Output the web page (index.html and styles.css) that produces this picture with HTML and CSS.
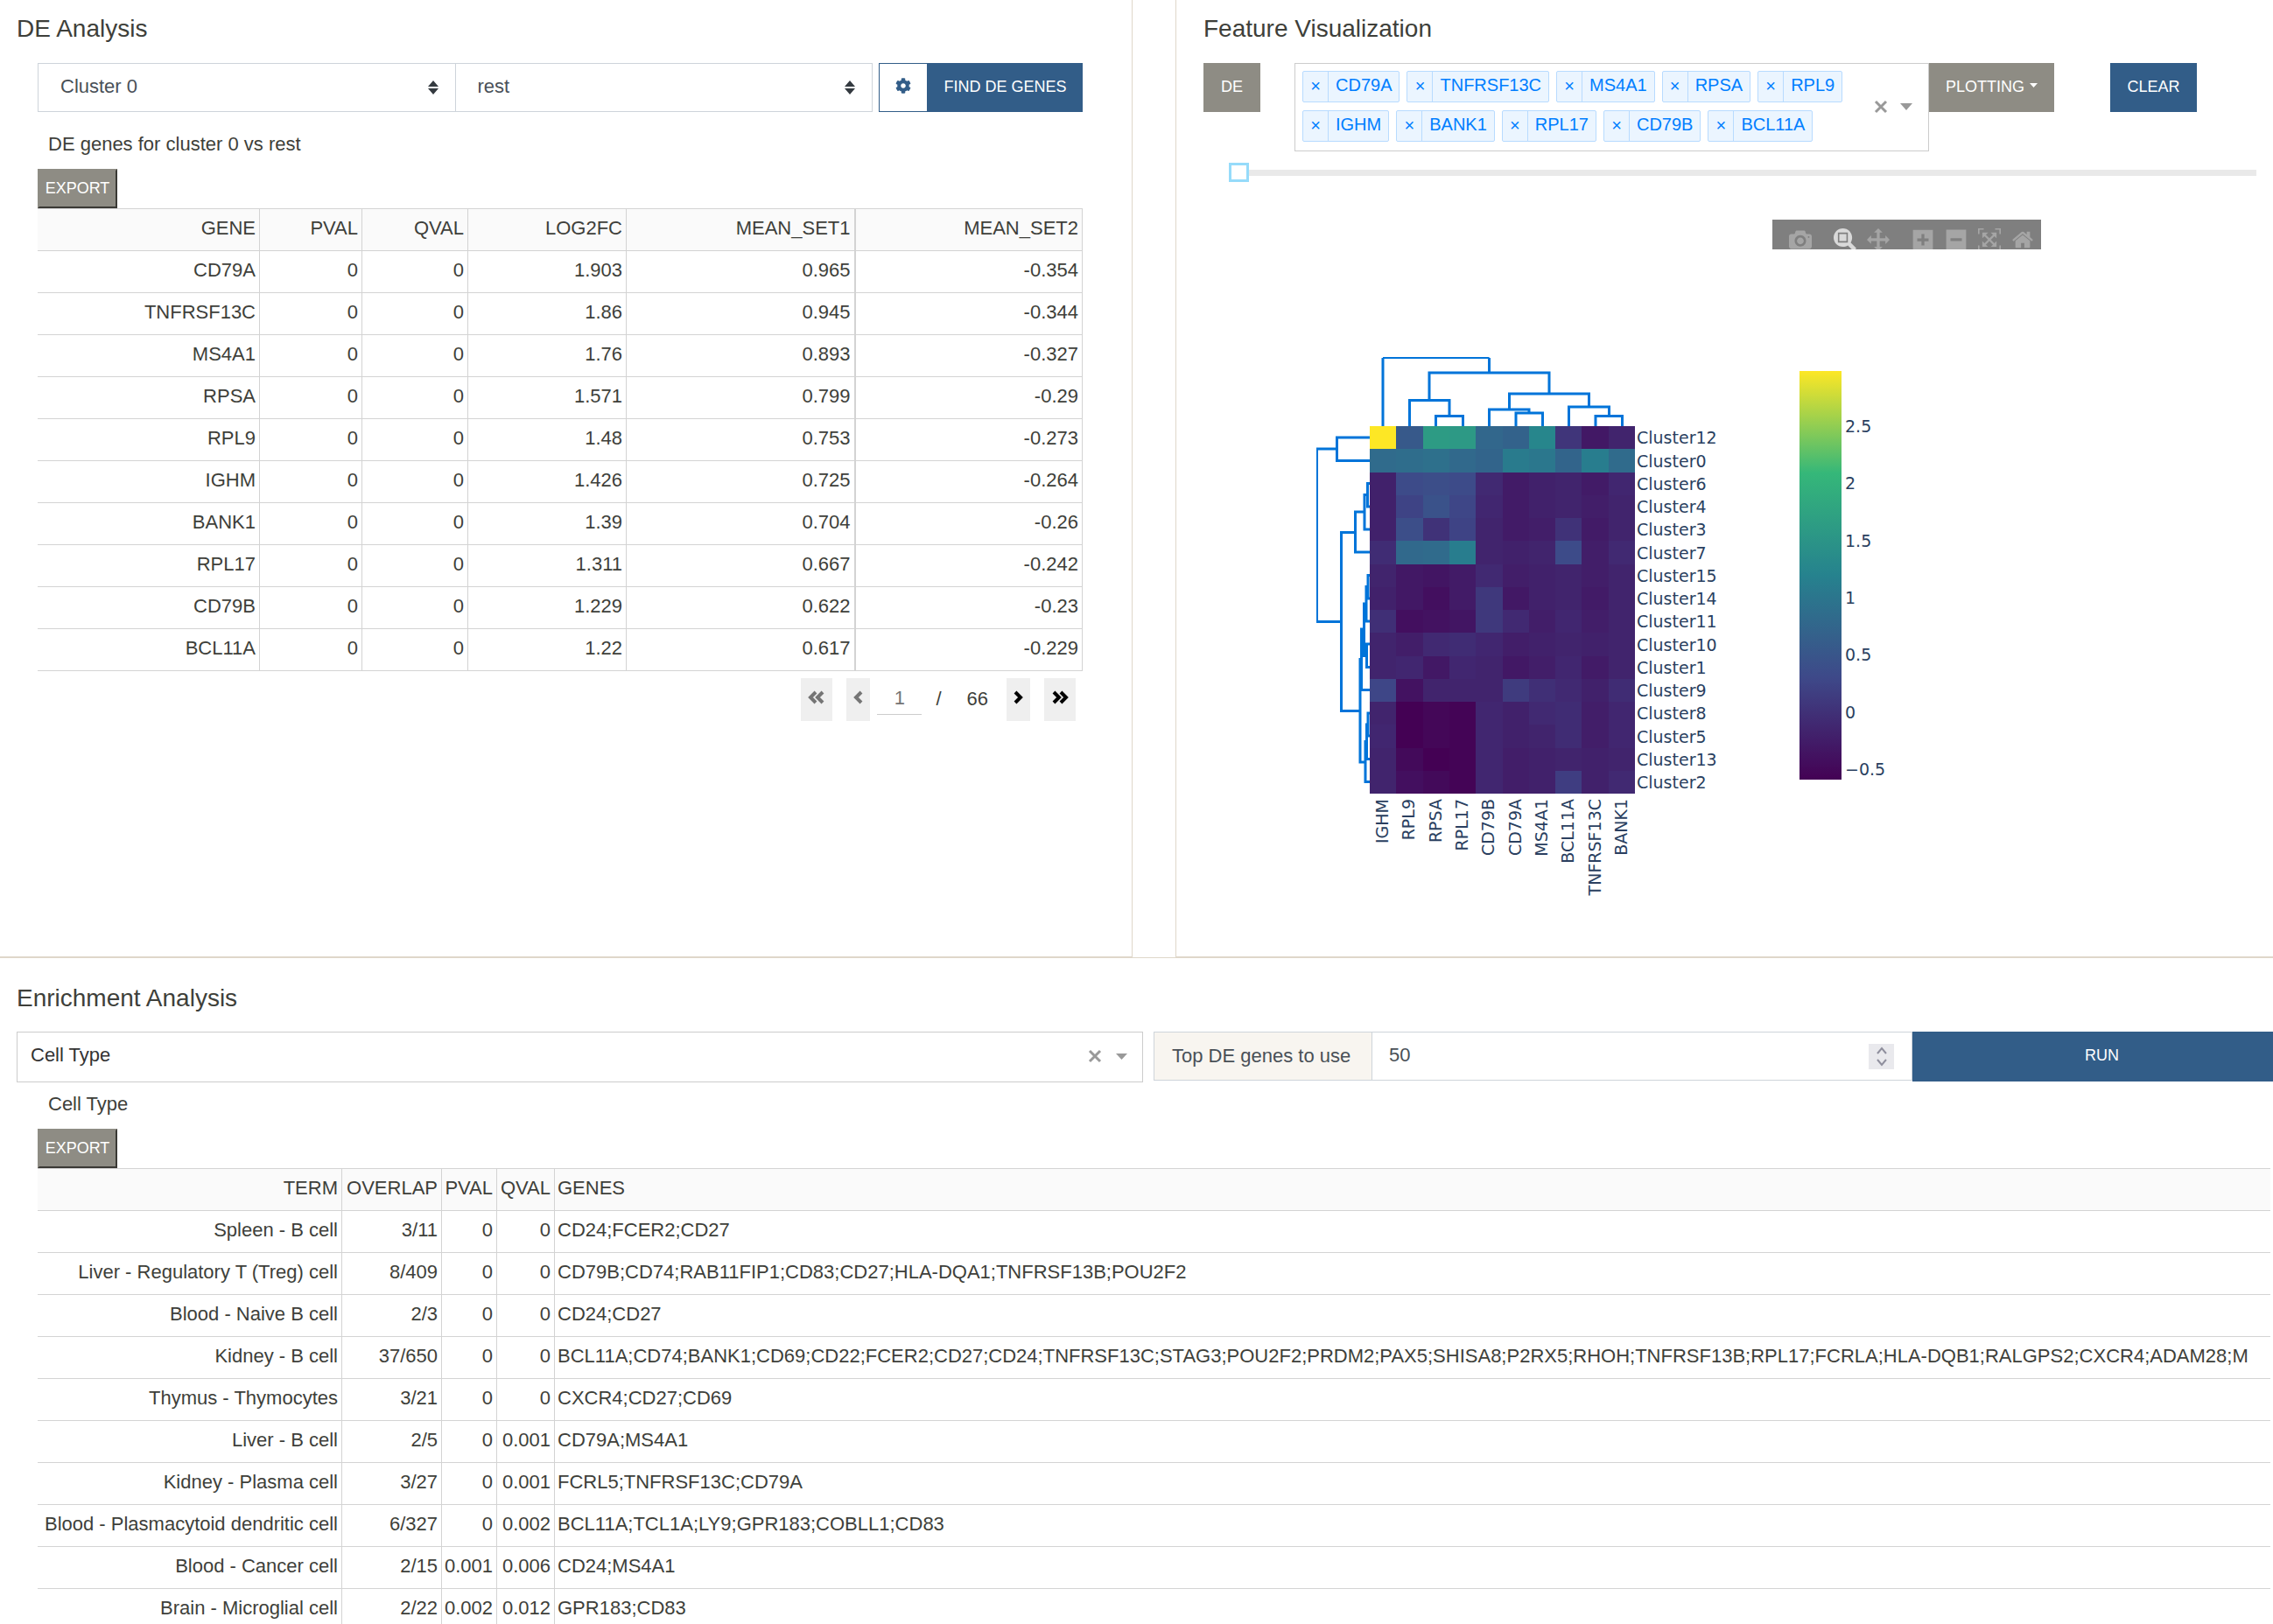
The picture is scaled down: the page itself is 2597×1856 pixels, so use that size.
FILE: index.html
```html
<!DOCTYPE html>
<html lang="en">
<head>
<meta charset="utf-8">
<title>Gene expression analysis</title>
<link rel="stylesheet" href="styles.css">
</head>
<body>
<main>
<div class="top-row">
  <section class="card">
    <h2 class="card-title">DE Analysis</h2>
    <div class="card-body">
      <div class="de-controls">
        <select class="pick" aria-label="First cluster"><option>Cluster 0</option></select>
        <select class="pick pick-joined" aria-label="Second cluster"><option>rest</option></select>
        <button class="btn btn-outline" type="button" aria-label="Settings">
          <svg class="gear" viewBox="0 0 512 512" aria-hidden="true"><path d="M487.4 315.7l-42.6-24.6c4.3-23.2 4.3-47 0-70.2l42.6-24.6c4.9-2.8 7.1-8.6 5.5-14-11.1-35.6-30-67.8-54.7-94.6-3.8-4.1-10-5.1-14.8-2.3L380.8 110c-17.9-15.4-38.5-27.3-60.8-35.1V25.8c0-5.6-3.9-10.5-9.4-11.7-36.7-8.2-74.3-7.8-109.2 0-5.5 1.2-9.4 6.1-9.4 11.7V75c-22.2 7.9-42.8 19.8-60.8 35.1L88.7 85.5c-4.9-2.8-11-1.9-14.8 2.3-24.7 26.7-43.6 58.9-54.7 94.6-1.7 5.4.6 11.2 5.5 14L67.3 221c-4.3 23.2-4.3 47 0 70.2l-42.6 24.6c-4.9 2.8-7.1 8.6-5.5 14 11.1 35.6 30 67.8 54.7 94.6 3.8 4.1 10 5.1 14.8 2.3l42.6-24.6c17.9 15.4 38.5 27.3 60.8 35.1v49.2c0 5.6 3.9 10.5 9.4 11.7 36.7 8.2 74.3 7.8 109.2 0 5.5-1.2 9.4-6.1 9.4-11.7v-49.2c22.2-7.9 42.8-19.8 60.8-35.1l42.6 24.6c4.9 2.8 11 1.9 14.8-2.3 24.7-26.7 43.6-58.9 54.7-94.6 1.5-5.5-.7-11.3-5.6-14.1zM256 336c-44.1 0-80-35.9-80-80s35.9-80 80-80 80 35.9 80 80-35.9 80-80 80z"/></svg>
        </button>
        <button class="btn btn-primary find" type="button">FIND DE GENES</button>
      </div>
      <p class="table-name">DE genes for cluster 0 vs rest</p>
      <button class="export" type="button">EXPORT</button>
      <table class="data">
        <colgroup><col class="w-gene"><col class="w-p"><col class="w-q"><col class="w-fc"><col><col></colgroup>
        <thead><tr><th>GENE</th><th>PVAL</th><th>QVAL</th><th>LOG2FC</th><th>MEAN_SET1</th><th class="split">MEAN_SET2</th></tr></thead>
        <tbody>
          <tr><td>CD79A</td><td>0</td><td>0</td><td>1.903</td><td>0.965</td><td class="split">-0.354</td></tr>
          <tr><td>TNFRSF13C</td><td>0</td><td>0</td><td>1.86</td><td>0.945</td><td class="split">-0.344</td></tr>
          <tr><td>MS4A1</td><td>0</td><td>0</td><td>1.76</td><td>0.893</td><td class="split">-0.327</td></tr>
          <tr><td>RPSA</td><td>0</td><td>0</td><td>1.571</td><td>0.799</td><td class="split">-0.29</td></tr>
          <tr><td>RPL9</td><td>0</td><td>0</td><td>1.48</td><td>0.753</td><td class="split">-0.273</td></tr>
          <tr><td>IGHM</td><td>0</td><td>0</td><td>1.426</td><td>0.725</td><td class="split">-0.264</td></tr>
          <tr><td>BANK1</td><td>0</td><td>0</td><td>1.39</td><td>0.704</td><td class="split">-0.26</td></tr>
          <tr><td>RPL17</td><td>0</td><td>0</td><td>1.311</td><td>0.667</td><td class="split">-0.242</td></tr>
          <tr><td>CD79B</td><td>0</td><td>0</td><td>1.229</td><td>0.622</td><td class="split">-0.23</td></tr>
          <tr><td>BCL11A</td><td>0</td><td>0</td><td>1.22</td><td>0.617</td><td class="split">-0.229</td></tr>
        </tbody>
      </table>
      <nav class="pager" aria-label="Table pages">
        <button class="page-btn" type="button" disabled aria-label="First page"><svg width="20" height="16" viewBox="0 0 20 16"><path d="M9 2L3 8l6 6M17 2l-6 6 6 6"/></svg></button>
        <button class="page-btn" type="button" disabled aria-label="Previous page"><svg width="11" height="16" viewBox="0 0 11 16"><path d="M9 2L3 8l6 6"/></svg></button>
        <input class="page-now" type="text" placeholder="1" aria-label="Current page">
        <span class="page-slash">/</span>
        <span class="page-last">66</span>
        <button class="page-btn" type="button" aria-label="Next page"><svg width="11" height="16" viewBox="0 0 11 16"><path d="M2 2l6 6-6 6"/></svg></button>
        <button class="page-btn" type="button" aria-label="Last page"><svg width="20" height="16" viewBox="0 0 20 16"><path d="M3 2l6 6-6 6M11 2l6 6-6 6"/></svg></button>
      </nav>
    </div>
  </section>

  <section class="card card-features">
    <h2 class="card-title">Feature Visualization</h2>
    <div class="card-body">
      <div class="feature-controls">
        <button class="btn btn-grey de" type="button">DE</button>
        <div class="multi">
          <ul class="tags">
            <li class="tag"><button type="button" aria-label="Remove CD79A">×</button><span>CD79A</span></li>
            <li class="tag"><button type="button" aria-label="Remove TNFRSF13C">×</button><span>TNFRSF13C</span></li>
            <li class="tag"><button type="button" aria-label="Remove MS4A1">×</button><span>MS4A1</span></li>
            <li class="tag"><button type="button" aria-label="Remove RPSA">×</button><span>RPSA</span></li>
            <li class="tag"><button type="button" aria-label="Remove RPL9">×</button><span>RPL9</span></li>
            <li class="tag"><button type="button" aria-label="Remove IGHM">×</button><span>IGHM</span></li>
            <li class="tag"><button type="button" aria-label="Remove BANK1">×</button><span>BANK1</span></li>
            <li class="tag"><button type="button" aria-label="Remove RPL17">×</button><span>RPL17</span></li>
            <li class="tag"><button type="button" aria-label="Remove CD79B">×</button><span>CD79B</span></li>
            <li class="tag"><button type="button" aria-label="Remove BCL11A">×</button><span>BCL11A</span></li>
          </ul>
          <button class="icon-btn" type="button" aria-label="Clear genes"><svg width="16" height="16" viewBox="0 0 16 16"><path class="cross" d="M2 2l12 12M14 2L2 14"/></svg></button>
          <button class="icon-btn" type="button" aria-label="Open gene list"><svg width="14" height="8" viewBox="0 0 14 8"><path class="caret" d="M0 0h14L7 8z"/></svg></button>
        </div>
        <button class="btn btn-grey plotting" type="button">PLOTTING<svg width="9" height="5" viewBox="0 0 9 5" aria-hidden="true"><path d="M0 0h9L4.500 5z"/></svg></button>
        <button class="btn btn-primary clear" type="button">CLEAR</button>
      </div>
      <input class="slider" type="range" min="0" max="100" value="0" aria-label="Expression threshold">
      <div class="plot">
        <div class="modebar">
          <div class="mode-group">
            <button type="button" aria-label="Download plot"><svg viewBox="0 0 1000 1000"><path transform="matrix(1 0 0 -1 0 850)" d="m500 450c-83 0-150-67-150-150 0-83 67-150 150-150 83 0 150 67 150 150 0 83-67 150-150 150z m400 150h-120c-16 0-34 13-39 29l-31 93c-6 15-23 28-40 28h-340c-16 0-34-13-39-28l-31-94c-6-15-23-28-40-28h-120c-55 0-100-45-100-100v-450c0-55 45-100 100-100h800c55 0 100 45 100 100v450c0 55-45 100-100 100z m-400-550c-138 0-250 112-250 250 0 138 112 250 250 250 138 0 250-112 250-250 0-138-112-250-250-250z m365 380c-19 0-35 16-35 35 0 19 16 35 35 35 19 0 35-16 35-35 0-19-16-35-35-35z"/></svg></button>
          </div>
          <div class="mode-group">
            <button class="on" type="button" aria-label="Zoom"><svg viewBox="0 0 1000 1000"><path transform="matrix(1 0 0 -1 0 850)" d="m1000-25l-250 251c40 63 63 138 63 218 0 224-182 406-407 406-224 0-406-182-406-406s183-406 407-406c80 0 155 22 218 62l250-250 125 125z m-812 250l0 438 437 0 0-438-437 0z m62 375l313 0 0-312-313 0 0 312z"/></svg></button>
            <button type="button" aria-label="Pan"><svg viewBox="0 0 1000 1000"><path transform="matrix(1 0 0 -1 0 850)" d="m1000 350l-187 188 0-125-250 0 0 250 125 0-188 187-187-187 125 0 0-250-250 0 0 125-188-188 186-187 0 125 252 0 0-250-125 0 187-188 188 188-125 0 0 250 250 0 0-126 187 188z"/></svg></button>
          </div>
          <div class="mode-group">
            <button type="button" aria-label="Zoom in"><svg viewBox="-62 0 1000 1000"><path transform="matrix(1 0 0 -1 0 850)" d="m1 787l0-875 875 0 0 875-875 0z m687-500l-187 0 0-187-125 0 0 187-188 0 0 125 188 0 0 187 125 0 0-187 187 0 0-125z"/></svg></button>
            <button type="button" aria-label="Zoom out"><svg viewBox="-62 0 1000 1000"><path transform="matrix(1 0 0 -1 0 850)" d="m0 788l0-876 875 0 0 876-875 0z m688-500l-500 0 0 125 500 0 0-125z"/></svg></button>
            <button type="button" aria-label="Autoscale"><svg viewBox="0 0 1000 1000"><path transform="matrix(1 0 0 -1 0 850)" d="m250 850l-187 0-63 0 0-62 0-188 63 0 0 188 187 0 0 62z m688 0l-188 0 0-62 188 0 0-188 62 0 0 188 0 62-62 0z m-875-938l0 188-63 0 0-188 0-62 63 0 187 0 0 62-187 0z m875 188l0-188-188 0 0-62 188 0 62 0 0 62 0 188-62 0z m-125 188l-1 0-93-94-156 156 156 156 92-93 2 0 0 250-250 0 0-2 93-92-156-156-156 156 94 92 0 2-250 0 0-250 0 0 93 93 157-156-157-156-93 94 0 0 0-250 250 0 0 0-94 93 156 157 156-157-93-93 0 0 250 0 0 250z"/></svg></button>
            <button type="button" aria-label="Reset axes"><svg viewBox="-36 0 1000 1000"><path transform="matrix(1 0 0 -1 0 850)" d="m786 296v-267q0-15-11-26t-25-10h-214v214h-143v-214h-214q-15 0-25 10t-11 26v267q0 1 0 2t0 2l321 264 321-264q1-1 1-4z m124 39l-34-41q-5-5-12-6h-2q-7 0-12 3l-386 322-386-322q-7-4-13-4-7 2-12 7l-35 41q-4 5-3 13t6 12l401 334q18 15 42 15t43-15l136-114v109q0 8 5 13t13 5h107q8 0 13-5t5-13v-227l122-102q5-5 6-12t-4-13z"/></svg></button>
          </div>
        </div>
        <svg class="chart" viewBox="1375 285 957 808" role="img" aria-label="Clustered heatmap of gene expression">
          <defs>
            <linearGradient id="scale" x1="0" y1="1" x2="0" y2="0">
              <stop offset="0" stop-color="#440154"/><stop offset=".25" stop-color="#3e4989"/><stop offset=".5" stop-color="#26828e"/><stop offset=".75" stop-color="#35b779"/><stop offset="1" stop-color="#fde725"/>
            </linearGradient>
          </defs>
          <g class="tree">
            <path class="root" d="M1580 409H1701.500M1505 512V712"/>
            <path d="M1580 487V409M1701.500 409V426M1633 457.500V426H1770V450M1610.500 487V457.500H1656V475.500M1640.500 487V475.500H1671.500V487M1724.500 468V450H1815.500V465M1701.500 487V468H1747V472M1732 487V472H1762.500V487M1792.500 487V465H1838.500V475.500M1823 487V475.500H1853.500V487"/>
            <path d="M1565 500H1527.500V526.500H1565M1527.500 513H1504M1504 710.500H1532.500M1548 608.500H1532.500V812.500H1554M1559 585H1548.500V631H1565M1562.500 565.500H1559V605H1565M1565 552.500H1562.500V579H1565M1555.500 753.500H1554V871H1560M1558.500 719H1555.500V788.500H1565M1561 690H1558.500V749.500H1562M1563 670.500H1561V710H1565M1565 657.500H1563V684H1565M1565 736H1561.500V762.500H1565M1561.500 847.500H1560V893.500H1565M1563 828H1561.500V867.500H1565M1565 815H1563V841H1565"/>
          </g>
          <g id="cells" shape-rendering="crispEdges"></g>
          <g id="rows" class="tick"></g>
          <g id="cols" class="tick" text-anchor="end"></g>
          <rect x="2056" y="424" width="48" height="467" fill="url(#scale)"/>
          <g class="tick">
            <text x="2108" y="494">2.5</text><text x="2108" y="559">2</text><text x="2108" y="625">1.5</text><text x="2108" y="690">1</text><text x="2108" y="755">0.5</text><text x="2108" y="821">0</text><text x="2108" y="886">−0.5</text>
          </g>
        </svg>
      </div>
    </div>
  </section>
</div>

<section class="enrichment">
  <h2 class="card-title">Enrichment Analysis</h2>
  <div class="enrich-controls">
    <div class="single">
      <select aria-label="Gene set"><option>Cell Type</option></select>
      <button class="icon-btn single-clear" type="button" aria-label="Clear gene set"><svg width="16" height="16" viewBox="0 0 16 16"><path class="cross" d="M2 2l12 12M14 2L2 14"/></svg></button>
    </div>
    <div class="number">
      <label for="top-genes">Top DE genes to use</label>
      <div class="number-box">
        <input id="top-genes" type="number" value="50">
        <svg class="stepper" width="29" height="29" viewBox="0 0 29 29" aria-hidden="true"><path d="M10 11l5-6 5 6M10 18l5 6 5-6"/></svg>
      </div>
    </div>
    <button class="btn btn-primary run" type="button">RUN</button>
  </div>
  <div class="enrich-table">
    <p class="table-name">Cell Type</p>
    <button class="export" type="button">EXPORT</button>
    <table class="data data-open">
      <colgroup><col class="w-term"><col class="w-overlap"><col class="w-pv"><col class="w-qv"><col></colgroup>
      <thead><tr><th>TERM</th><th>OVERLAP</th><th>PVAL</th><th>QVAL</th><th>GENES</th></tr></thead>
      <tbody>
        <tr><td>Spleen - B cell</td><td>3/11</td><td>0</td><td>0</td><td>CD24;FCER2;CD27</td></tr>
        <tr><td>Liver - Regulatory T (Treg) cell</td><td>8/409</td><td>0</td><td>0</td><td>CD79B;CD74;RAB11FIP1;CD83;CD27;HLA-DQA1;TNFRSF13B;POU2F2</td></tr>
        <tr><td>Blood - Naive B cell</td><td>2/3</td><td>0</td><td>0</td><td>CD24;CD27</td></tr>
        <tr><td>Kidney - B cell</td><td>37/650</td><td>0</td><td>0</td><td>BCL11A;CD74;BANK1;CD69;CD22;FCER2;CD27;CD24;TNFRSF13C;STAG3;POU2F2;PRDM2;PAX5;SHISA8;P2RX5;RHOH;TNFRSF13B;RPL17;FCRLA;HLA-DQB1;RALGPS2;CXCR4;ADAM28;M</td></tr>
        <tr><td>Thymus - Thymocytes</td><td>3/21</td><td>0</td><td>0</td><td>CXCR4;CD27;CD69</td></tr>
        <tr><td>Liver - B cell</td><td>2/5</td><td>0</td><td>0.001</td><td>CD79A;MS4A1</td></tr>
        <tr><td>Kidney - Plasma cell</td><td>3/27</td><td>0</td><td>0.001</td><td>FCRL5;TNFRSF13C;CD79A</td></tr>
        <tr><td>Blood - Plasmacytoid dendritic cell</td><td>6/327</td><td>0</td><td>0.002</td><td>BCL11A;TCL1A;LY9;GPR183;COBLL1;CD83</td></tr>
        <tr><td>Blood - Cancer cell</td><td>2/15</td><td>0.001</td><td>0.006</td><td>CD24;MS4A1</td></tr>
        <tr><td>Brain - Microglial cell</td><td>2/22</td><td>0.002</td><td>0.012</td><td>GPR183;CD83</td></tr>
      </tbody>
    </table>
  </div>
</section>
</main>
<script src="heatmap.js"></script>
</body>
</html>
```
FILE: styles.css
```css
* { box-sizing: border-box; }

html { scrollbar-width: none; }

body {
  margin: 0;
  overflow-x: hidden;
  background: #fff;
  color: #3e3f3a;
  font: 22px/24px "Liberation Sans", Arial, sans-serif;
}

button, input, select { font: inherit; margin: 0; border-radius: 0; }
button { cursor: pointer; }

/* Cards */
.top-row {
  display: grid;
  grid-template-columns: minmax(0, 1294fr) minmax(0, 1254fr);
  column-gap: 49px;
}

.card {
  padding-top: 16px;
  border-right: 1px solid #dfd7ca;
  border-bottom: 1px solid #dfd7ca;
}

.card-features {
  border-right: 0;
  border-left: 1px solid #dfd7ca;
}

.card-title {
  margin: 0 0 22px;
  padding-left: 19px;
  font-size: 28px;
  font-weight: 400;
  line-height: 34px;
}

.card-body { padding: 0 56px 0 43px; }
.card-features .card-title { padding-left: 31px; }
.card-features .card-body { padding: 0 0 0 31px; }

/* Buttons */
.btn {
  height: 56px;
  padding: 0 0 3px;
  border: 0;
  color: #fff;
  font-size: 18px;
  line-height: 24px;
}

.btn-primary { background: #325d88; }
.btn-grey { background: #8e8c84; }

.btn-outline {
  width: 56px;
  margin-left: 7px;
  padding: 2px 0 0;
  border: 1px solid #325d88;
  background: #fff;
}

.gear { width: 18px; height: 18px; fill: #325d88; }

.icon-btn { padding: 0; border: 0; background: none; line-height: 0; }
.cross { fill: none; stroke: #999; stroke-width: 3; }
.caret { fill: #999; }

.export {
  display: block;
  width: 91px;
  height: 45px;
  padding: 0 0 2px;
  border: 2px outset #8e8c84;
  background: #8e8c84;
  color: #fff;
  font-size: 18px;
}

/* DE controls */
.de-controls { display: flex; }

.pick {
  flex: 1;
  min-width: 0;
  height: 56px;
  padding: 0 25px 3px;
  appearance: none;
  border: 1px solid #ced4da;
  color: #495057;
  background: #fff url("data:image/svg+xml,%3Csvg xmlns='http://www.w3.org/2000/svg' viewBox='0 0 14 16'%3E%3Cpath fill='%23343a40' d='M7 0l6 7H1zM1 9h12l-6 7z'/%3E%3C/svg%3E") no-repeat right 18px center / 14px 16px;
}

.pick-joined { margin-left: -1px; }
.find { width: 177px; }

.table-name {
  margin: 20px 0 11px;
  padding-left: 12px;
  line-height: 34px;
}

/* Data tables */
.data {
  width: 100%;
  table-layout: fixed;
  border-collapse: separate;
  border-spacing: 0;
}

.data th, .data td {
  height: 48px;
  padding: 10px 4px 13px 2px;
  border-right: 1px solid #d3d3d3;
  border-bottom: 1px solid #d3d3d3;
  font-weight: 400;
  text-align: right;
  white-space: nowrap;
}

.data th {
  border-top: 1px solid #d3d3d3;
  background: #fafafa;
}

.data .split { border-left: 1px solid #d3d3d3; }

.data-open tr > :last-child {
  padding-left: 3px;
  border-right: 0;
  text-align: left;
  overflow: hidden;
}

.w-gene { width: 254px; }
.w-p { width: 117px; }
.w-q { width: 121px; }
.w-fc { width: 181px; }
.w-term { width: 348px; }
.w-overlap { width: 114px; }
.w-pv { width: 63px; }
.w-qv { width: 66px; }

/* Pagination */
.pager {
  display: flex;
  justify-content: flex-end;
  align-items: flex-start;
  padding: 8px 8px 0 0;
}

.page-btn {
  height: 49px;
  padding: 0 8px 5px;
  border: 0;
  background: #efefef;
  line-height: 0;
}

.page-btn + .page-btn { margin-left: 16px; }
.page-btn path { fill: none; stroke: #000; stroke-width: 4; }
.page-btn:disabled path { stroke: #757575; }

.page-now {
  width: 51px;
  height: 42px;
  margin-left: 8px;
  padding: 4px 0 0;
  border: 0;
  border-bottom: 1px solid #ccc;
  background: none;
  text-align: center;
}

.page-now::placeholder { color: #757575; opacity: 1; }
.page-slash, .page-last { padding-top: 12px; }
.page-slash { margin: 0 29px 0 16px; }
.page-last { margin-right: 21px; }

/* Feature controls */
.feature-controls { display: flex; align-items: flex-start; padding-right: 87px; }
.de { width: 65px; margin-right: 39px; }

.multi {
  flex: 1;
  display: flex;
  align-items: center;
  min-width: 0;
  padding: 8px 18px 10px 8px;
  border: 1px solid #ccc;
}

.tags {
  flex: 1;
  display: flex;
  flex-wrap: wrap;
  gap: 9px 8px;
  margin: 0;
  padding: 0;
  list-style: none;
}

.tag {
  display: flex;
  height: 36px;
  border: 1px solid #b8dbff;
  border-radius: 2px;
  background: #ebf5ff;
  color: #007eff;
  font-size: 20px;
}

.tag button {
  width: 29px;
  padding: 0 0 2px;
  border: 0;
  border-right: 1px solid #b8dbff;
  background: none;
  color: inherit;
}

.tag span { padding: 3px 8px; }
.multi .icon-btn + .icon-btn { margin-left: 14px; }
.plotting { width: 143px; }
.plotting svg { margin: 0 0 5px 6px; fill: #fff; }
.clear { width: 99px; margin-left: 64px; }

/* Range slider */
.card-features .slider {
  display: block;
  width: calc(100% - 48px);
  height: 22px;
  margin: 13px 0 43px 29px;
  appearance: none;
  background: linear-gradient(#e9e9e9, #e9e9e9) no-repeat center / 100% 7px;
}

.slider::-webkit-slider-thumb {
  appearance: none;
  width: 23px;
  height: 22px;
  border: 3px solid #96dbfa;
  background: #fff;
}

/* Plot */
.plot { max-width: 957px; }

.modebar {
  display: flex;
  gap: 13px;
  width: max-content;
  height: 34px;
  margin-left: auto;
  padding: 10px 2px 0 13px;
  overflow: hidden;
  background: #7f7f7f;
}

.mode-group { display: flex; }

.modebar button {
  width: 38px;
  height: 26px;
  padding: 0;
  border: 0;
  background: none;
  line-height: 0;
}

.modebar svg { width: 26px; height: 26px; fill: #a5a5a5; }
.modebar .on svg { fill: #d9d9d9; }

.chart { display: block; width: 100%; }
.tree path { fill: none; stroke: #0074d9; stroke-width: 3; }
.tree .root { stroke-width: 2; }
.tick { fill: #2a3f5f; font: 19px "DejaVu Sans", Verdana, sans-serif; }

/* Enrichment */
.enrichment {
  padding-top: 29px;
  border-top: 1px solid #dfd7ca;
}

.enrichment .card-title { margin-bottom: 21px; }

.enrich-controls {
  display: grid;
  grid-template-columns: minmax(0, 1299fr) minmax(0, 867fr) minmax(0, 433fr);
  align-items: start;
  margin-right: -21px;
  padding-left: 19px;
}

.single { position: relative; margin-right: 12px; }

.single select {
  display: block;
  width: 100%;
  height: 58px;
  padding: 0 15px 4px;
  appearance: none;
  border: 1px solid #ccc;
  color: #333;
  background: #fff url("data:image/svg+xml,%3Csvg xmlns='http://www.w3.org/2000/svg' viewBox='0 0 13 8'%3E%3Cpath fill='%23999' d='M0 0h13L6.500 7z'/%3E%3C/svg%3E") no-repeat right 17px center / 13px 8px;
}

.single-clear { position: absolute; top: 20px; right: 47px; }

.number { display: flex; height: 56px; }

.number label {
  width: 250px;
  padding: 15px 0 0 20px;
  border: 1px solid #ced4da;
  background: #f8f5f0;
  color: #495057;
}

.number-box {
  flex: 1;
  display: flex;
  align-items: center;
  min-width: 0;
  padding-right: 20px;
  border: 1px solid #ced4da;
  border-left: 0;
}

.number-box input {
  flex: 1;
  min-width: 0;
  height: 54px;
  padding: 0 0 2px 19px;
  appearance: textfield;
  border: 0;
  background: none;
  color: #495057;
}

.number-box input::-webkit-inner-spin-button { appearance: none; margin: 0; }
.stepper { background: #e9e9ed; }
.stepper path { fill: none; stroke: #8f8f9d; stroke-width: 2; }
.run { height: 57px; }

.enrich-table { margin: 0 3px 0 43px; }
.enrich-table .table-name { margin-top: 8px; }
```
FILE: heatmap.js
```js
// Cell values as percentages of the colour range, one row per cluster.
const genes = ["IGHM", "RPL9", "RPSA", "RPL17", "CD79B", "CD79A", "MS4A1", "BCL11A", "TNFRSF13C", "BANK1"];
const clusters = [
  ["Cluster12", [100, 32, 62, 61, 38, 36, 52, 18, 8, 12]],
  ["Cluster0", [40, 41, 42, 39, 37, 47, 45, 37, 48, 40]],
  ["Cluster6", [11, 26, 27, 26, 14, 9, 11, 12, 9, 13]],
  ["Cluster4", [11, 23, 29, 24, 13, 9, 11, 12, 10, 12]],
  ["Cluster3", [11, 27, 17, 23, 12, 9, 10, 17, 9, 12]],
  ["Cluster7", [15, 39, 40, 48, 12, 11, 12, 26, 10, 14]],
  ["Cluster15", [12, 8, 7, 9, 14, 10, 11, 12, 10, 12]],
  ["Cluster14", [11, 8, 5, 9, 19, 8, 11, 12, 9, 12]],
  ["Cluster11", [16, 5, 6, 7, 19, 14, 10, 13, 10, 12]],
  ["Cluster10", [12, 10, 14, 15, 13, 10, 11, 12, 11, 12]],
  ["Cluster1", [12, 13, 8, 13, 12, 8, 10, 13, 9, 12]],
  ["Cluster9", [24, 6, 12, 12, 12, 20, 16, 14, 11, 15]],
  ["Cluster8", [12, 0, 2, 1, 13, 11, 14, 15, 10, 13]],
  ["Cluster5", [13, 0, 2, 1, 13, 11, 12, 15, 10, 13]],
  ["Cluster13", [12, 3, 0, 1, 13, 10, 11, 12, 11, 12]],
  ["Cluster2", [12, 5, 3, 1, 13, 10, 11, 21, 11, 14]]
];
const stops = [[68, 1, 84], [62, 73, 137], [38, 130, 142], [53, 183, 121], [253, 231, 37]];
const box = { x: 1565, y: 487, w: 303, h: 420 };
const cw = box.w / genes.length;
const ch = box.h / clusters.length;

function colour(percent) {
  const p = percent / 25;
  const i = Math.min(3, Math.floor(p));
  const mix = stops[i].map((c, k) => Math.round(c + (stops[i + 1][k] - c) * (p - i)));
  return `rgb(${mix.join(",")})`;
}

function add(parent, name, attrs, text) {
  const el = document.createElementNS("http://www.w3.org/2000/svg", name);
  for (const key in attrs) el.setAttribute(key, attrs[key]);
  if (text) el.textContent = text;
  document.getElementById(parent).appendChild(el);
}

clusters.forEach(([name, values], r) => {
  const y0 = Math.round(box.y + r * ch);
  const y1 = Math.round(box.y + (r + 1) * ch);
  values.forEach((v, c) => {
    const x0 = Math.round(box.x + c * cw);
    const x1 = Math.round(box.x + (c + 1) * cw);
    add("cells", "rect", { x: x0, y: y0, width: x1 - x0, height: y1 - y0, fill: colour(v) });
  });
  add("rows", "text", { x: 1870, y: Math.round((y0 + y1) / 2) + 7 }, name);
});

genes.forEach((name, c) => {
  const x = Math.round(box.x + (c + 0.5) * cw) + 6;
  add("cols", "text", { transform: `translate(${x} 913) rotate(-90)` }, name);
});
```
